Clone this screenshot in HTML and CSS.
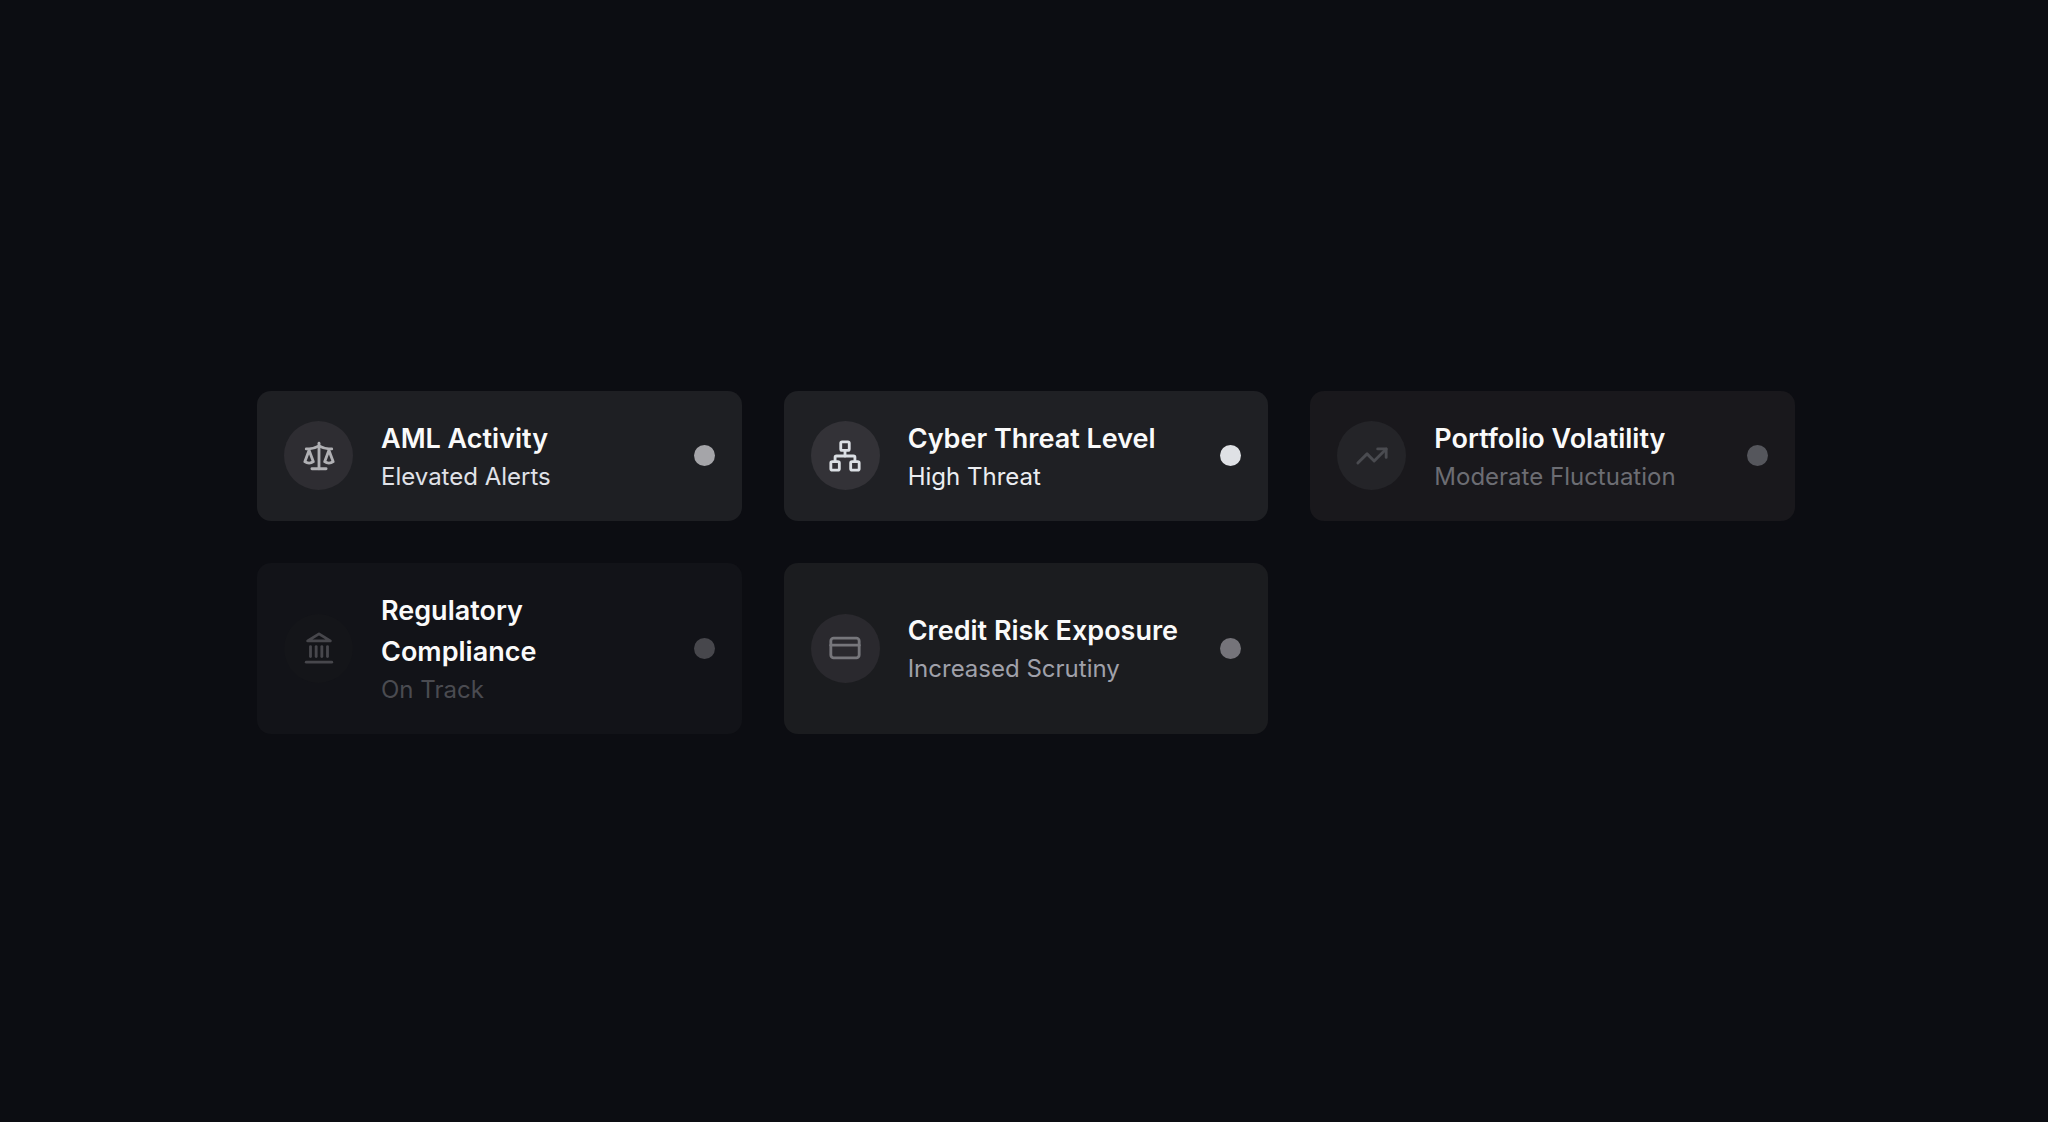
FILE: index.html
```html
<!DOCTYPE html>
<html lang="en">
<head>
    <meta charset="UTF-8">
    <meta name="viewport" content="width=device-width, initial-scale=1.0">
    <title>Risk Overview</title>
    <link rel="stylesheet" href="styles.css">
</head>
<body>
    <main class="risk-grid">
        <article class="card elevated">
            <div class="card-icon">
                <svg viewBox="0 0 24 24" aria-hidden="true">
                    <path d="m16 16 3-8 3 8c-.87.65-1.92 1-3 1s-2.13-.35-3-1Z"/>
                    <path d="m2 16 3-8 3 8c-.87.65-1.92 1-3 1s-2.13-.35-3-1Z"/>
                    <path d="M7 21h10"/>
                    <path d="M12 3v18"/>
                    <path d="M3 7h2c2 0 5-1 7-2 2 1 5 2 7 2h2"/>
                </svg>
            </div>
            <div class="card-text">
                <h2>AML Activity</h2>
                <p>Elevated Alerts</p>
            </div>
            <span class="dot"></span>
        </article>

        <article class="card high">
            <div class="card-icon">
                <svg viewBox="0 0 24 24" aria-hidden="true">
                    <rect x="16" y="16" width="6" height="6" rx="1"/>
                    <rect x="2" y="16" width="6" height="6" rx="1"/>
                    <rect x="9" y="2" width="6" height="6" rx="1"/>
                    <path d="M5 16v-3a1 1 0 0 1 1-1h12a1 1 0 0 1 1 1v3"/>
                    <path d="M12 12V8"/>
                </svg>
            </div>
            <div class="card-text">
                <h2>Cyber Threat Level</h2>
                <p>High Threat</p>
            </div>
            <span class="dot"></span>
        </article>

        <article class="card moderate">
            <div class="card-icon">
                <svg viewBox="0 0 24 24" aria-hidden="true">
                    <path d="m22 7-8.5 8.5-5-5L2 17"/>
                    <path d="M16 7h6v6"/>
                </svg>
            </div>
            <div class="card-text">
                <h2>Portfolio Volatility</h2>
                <p>Moderate Fluctuation</p>
            </div>
            <span class="dot"></span>
        </article>

        <article class="card on-track">
            <div class="card-icon">
                <svg viewBox="0 0 24 24" aria-hidden="true">
                    <path d="M3 22h18"/>
                    <path d="M6 18v-7"/>
                    <path d="M10 18v-7"/>
                    <path d="M14 18v-7"/>
                    <path d="M18 18v-7"/>
                    <path d="m12 2 8 5H4Z"/>
                </svg>
            </div>
            <div class="card-text">
                <h2>Regulatory Compliance</h2>
                <p>On Track</p>
            </div>
            <span class="dot"></span>
        </article>

        <article class="card increased">
            <div class="card-icon">
                <svg viewBox="0 0 24 24" aria-hidden="true">
                    <rect x="2" y="5" width="20" height="14" rx="2"/>
                    <path d="M2 10h20"/>
                </svg>
            </div>
            <div class="card-text">
                <h2>Credit Risk Exposure</h2>
                <p>Increased Scrutiny</p>
            </div>
            <span class="dot"></span>
        </article>
    </main>
</body>
</html>
```
FILE: styles.css
```css
:root {
    --page-bg: #0c0d12;
    --title-color: #fafafa;
}

* {
    box-sizing: border-box;
}

body {
    margin: 0;
    min-height: 100vh;
    padding: 42px 36px 40px 40px;
    display: flex;
    align-items: center;
    justify-content: center;
    background-color: var(--page-bg);
    color: var(--title-color);
    font-family: Inter, "Liberation Sans", sans-serif;
}

.risk-grid {
    width: 100%;
    max-width: 1538px;
    display: grid;
    grid-template-columns: repeat(3, 1fr);
    gap: 42px;
}

.card {
    display: flex;
    align-items: center;
    padding: 27px;
    border-radius: 14px;
    background-color: var(--card-bg);
}

.card-icon {
    flex: none;
    width: 69px;
    height: 69px;
    margin-right: 28px;
    border-radius: 50%;
    display: flex;
    align-items: center;
    justify-content: center;
    background-color: var(--icon-bg);
}

.card-icon svg {
    width: 34px;
    height: 34px;
    fill: none;
    stroke: var(--icon-color);
    stroke-width: 2;
    stroke-linecap: round;
    stroke-linejoin: round;
}

.card-text {
    flex: 1;
}

.card h2 {
    margin: 0;
    font-size: 27px;
    font-weight: 600;
    line-height: 41px;
}

.card p {
    margin: 0;
    font-size: 24px;
    line-height: 35px;
    color: var(--sub-color);
}

.dot {
    flex: none;
    width: 21px;
    height: 21px;
    margin-left: 28px;
    border-radius: 50%;
    background-color: var(--dot-color);
}

.elevated {
    --card-bg: #1e1f23;
    --icon-bg: #2e2d32;
    --icon-color: #b0b0b4;
    --sub-color: #e0e2e8;
    --dot-color: #a5a5a9;
}

.high {
    --card-bg: #1f2024;
    --icon-bg: #333237;
    --icon-color: #dbdfe4;
    --sub-color: #ebedf1;
    --dot-color: #dfe1e5;
}

.moderate {
    --card-bg: #19181c;
    --icon-bg: #242428;
    --icon-color: #4a4b50;
    --sub-color: #6c6d73;
    --dot-color: #55565c;
}

.on-track {
    --card-bg: #121318;
    --icon-bg: #141519;
    --icon-color: #47474c;
    --sub-color: #4a4b51;
    --dot-color: #47474c;
}

.increased {
    --card-bg: #1b1c1f;
    --icon-bg: #2a292e;
    --icon-color: #76767b;
    --sub-color: #a0a1aa;
    --dot-color: #75747a;
}

@media (max-width: 1400px) {
    .risk-grid {
        grid-template-columns: repeat(2, 1fr);
    }
}

@media (max-width: 900px) {
    .risk-grid {
        grid-template-columns: 1fr;
    }
}
```
